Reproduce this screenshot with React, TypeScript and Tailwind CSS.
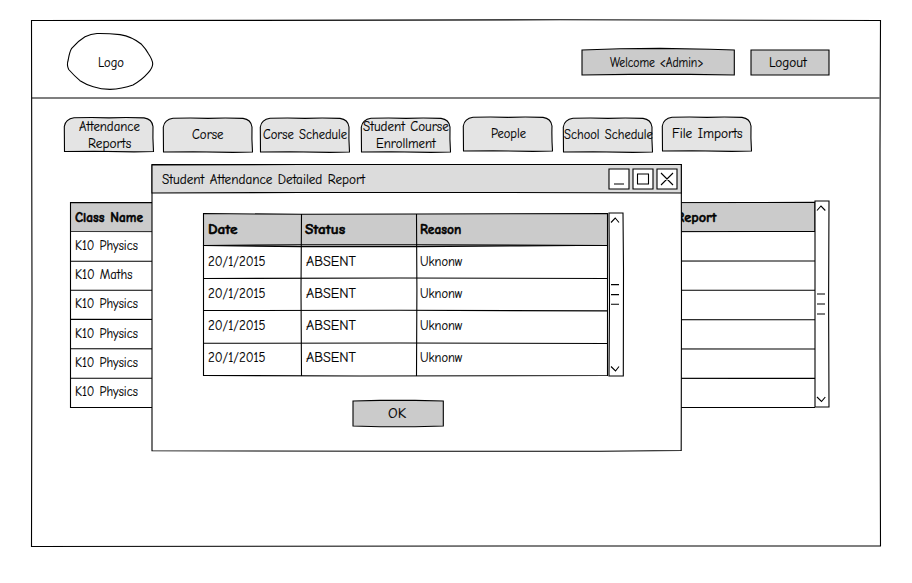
import { useLayoutEffect, useRef, useState } from "react";
import type { ReactNode } from "react";

/* Text stretched horizontally so that it fills the given width. */
function Fit({ children, w, className = "" }: { children: string; w: number; className?: string }) {
  const ref = useRef<HTMLSpanElement>(null);
  const [scale, setScale] = useState(1);
  useLayoutEffect(() => {
    const el = ref.current;
    if (el) setScale(w / el.offsetWidth);
  }, [w, children]);
  return (
    <span className={`block h-4 text-[13px] leading-[18px] ${className}`} style={{ width: w }}>
      <span
        ref={ref}
        className="block w-max origin-left whitespace-nowrap [word-spacing:1px]"
        style={{ transform: `scaleX(${scale})` }}
      >
        {children}
      </span>
    </span>
  );
}

/* Hand-drawn outline behind a box; path coordinates are page coordinates. */
function Sketch({ box, children }: { box: string; children: ReactNode }) {
  return (
    <svg
      viewBox={box}
      className="pointer-events-none absolute inset-0 h-full w-full overflow-visible"
      fill="none"
      stroke="#000"
      strokeWidth="1.1"
    >
      {children}
    </svg>
  );
}

const bold = "font-black [-webkit-text-stroke:0.45px_#000]";

const tabs = [
  { x: 64, y: 117.5, gap: "", pad: "pt-[1px]", lines: [{ t: "Attendance", w: 61 }, { t: "Reports", w: 43 }] },
  { x: 163, y: 118, gap: "ml-[9px]", pad: "pt-[9px]", lines: [{ t: "Corse", w: 31.5 }] },
  { x: 260, y: 118, gap: "ml-[7px]", pad: "pt-[9px]", lines: [{ t: "Corse Schedule", w: 84 }] },
  { x: 361, y: 118, gap: "ml-[11px]", pad: "pt-[1px]", lines: [{ t: "Student Course", w: 86 }, { t: "Enrollment", w: 60 }] },
  { x: 463, y: 117, gap: "ml-[12px]", pad: "pt-[8px]", lines: [{ t: "People", w: 34.5 }] },
  { x: 563, y: 118, gap: "ml-[10px]", pad: "pt-[9px]", lines: [{ t: "School Schedule", w: 88.5 }] },
  { x: 662, y: 117, gap: "ml-[9px]", pad: "pt-[8px]", lines: [{ t: "File Imports", w: 70.5 }] },
];

function Tab({ tab }: { tab: (typeof tabs)[number] }) {
  const { x, y } = tab;
  return (
    <div className={`relative h-[36px] w-[90px] ${tab.gap}`}>
      <Sketch box={`${x} 117 90 36`}>
        <path
          fill="#e4e4e4"
          d={`M${x + 0.5} ${y + 34} L${x + 0.3} ${y + 9} Q${x + 1.5} ${y + 1.5} ${x + 10} ${y + 0.3} Q${x + 30} ${y - 0.4} ${x + 45} ${y + 0.4} Q${x + 62} ${y - 0.4} ${x + 80} ${y + 0.4} Q${x + 88} ${y + 1.5} ${x + 89} ${y + 9} Q${x + 88.6} ${y + 20} ${x + 89.5} ${y + 34} L${x + 70} ${y + 34.4} L${x + 30} ${y + 33.7} Z`}
        />
      </Sketch>
      <div className={`relative flex flex-col items-center gap-px ${tab.pad}`}>
        {tab.lines.map((l) => (
          <Fit key={l.t} w={l.w}>{l.t}</Fit>
        ))}
      </div>
    </div>
  );
}

const classes = [
  { t: "K10 Physics", w: 63, h: "h-[29px]" },
  { t: "K10 Maths", w: 57, h: "h-[29px]" },
  { t: "K10 Physics", w: 63, h: "h-[30px]" },
  { t: "K10 Physics", w: 63, h: "h-[29px]" },
  { t: "K10 Physics", w: 63, h: "h-[29px]" },
  { t: "K10 Physics", w: 63, h: "h-[29px]" },
];

function ClassTable() {
  return (
    <div className="mt-[48px] ml-[39px] flex">
      <div className="relative h-[207px] w-[745px]">
        <Sketch box="70 201 745 207">
          <path fill="#cbcbcb" d="M70.5 202.5 L400 202.8 L815 202.4 V231.5 L400 232 L70.5 231.5 Z" />
          <path d="M70.5 231.5 V407.5 H815" />
          <path d="M70.5 261.3 L815 261M70.5 290.2 L815 290.2M70.5 319.4 L815 319.8M70.5 348.8 L815 349M70.5 378.2 L815 378.4" />
        </Sketch>
        <div className="relative flex h-[31px] pt-[8px] pl-[4.5px]">
          <Fit w={68} className={bold}>Class Name</Fit>
          <Fit w={40.5} className={`mr-[98.5px] ml-auto ${bold}`}>Report</Fit>
        </div>
        {classes.map((c, i) => (
          <div key={i} className={`relative pt-[5px] pl-[5px] ${c.h}`}>
            <Fit w={c.w}>{c.t}</Fit>
          </div>
        ))}
      </div>
      <div className="relative h-[207px] w-[15px]">
        <Sketch box="815 201 15 207">
          <path fill="#fff" d="M815 201 H829 L828.6 300 L829 407 H815 Z" />
          <path d="M817 210.5 L821 206 L825.3 210.5M817 397 L821.5 401.5 L825.3 397M817 294 H825M817 304 H825M817 314 H825" />
        </Sketch>
      </div>
    </div>
  );
}

function AbsenceTable() {
  return (
    <div className="ml-[52px] mt-[20px] flex">
      <div className="relative h-[164px] w-[405px]">
        <Sketch box="203 213 405 164">
          <path fill="#cbcbcb" d="M203.5 213.5 L301 214.3 L416 214 L607.5 213.5 V245.3 L520 246 L417 246.6 L300 246.6 L203.5 245.5 Z" />
          <path d="M203.5 245.5 L300 244.8 L417 244.8 L607.5 245.5M203.5 245 V375.5 L360 376 L607.5 375.5 V245" />
          <path d="M301.5 214 L301 290 L301.5 376M416.5 214 L416.9 290 L416.5 376" />
          <path d="M203.5 278.5 L400 278 L607.5 278.5M203.5 310.5 L400 310.3 L607.5 310.9M203.5 343.3 L400 343 L607.5 343.5" />
        </Sketch>
        <div className="relative grid h-[33px] grid-cols-[97px_114.5px_1fr] pt-[8px] pl-[5px]">
          <Fit w={29.5} className={bold}>Date</Fit>
          <Fit w={40} className={bold}>Status</Fit>
          <Fit w={41.5} className={bold}>Reason</Fit>
        </div>
        {[0, 1, 2, 3].map((r) => (
          <div key={r} className="relative grid h-[32px] grid-cols-[97.5px_114px_1fr] pt-[7px] pl-[5px]">
            <Fit w={57.5}>20/1/2015</Fit>
            <Fit w={50}>ABSENT</Fit>
            <Fit w={42}>Uknonw</Fit>
          </div>
        ))}
      </div>
      <div className="relative h-[164px] w-[16px]">
        <Sketch box="608 213 16 164">
          <path fill="#fff" d="M609 213 H623 L623.5 270 L623.3 376 H609 L609.5 300 Z" />
          <path d="M611 222.5 L615.2 218 L619 222.5M611 366.5 L615.5 371 L619 366.5M611 284.6 H619M611 294.6 H619M611 304.2 H619" />
        </Sketch>
      </div>
    </div>
  );
}

function Dialog() {
  return (
    <div className="absolute top-[164px] left-[151px] h-[288px] w-[531px]">
      <Sketch box="151 164 531 288">
        <path fill="#fff" d="M152 164.5 L681.3 164.5 L681.5 300 L681.2 450.5 L600 451.2 L400 451.3 L152 450.8 Z" />
        <path fill="#dcdcdc" d="M152 165 L300 164.5 L681.3 164.5 V193 L500 192.5 L300 192.5 L152 193 Z" />
      </Sketch>
      <div className="relative flex h-[29px] items-start pt-[4px] pr-[4px] pl-[11px]">
        <Fit w={202.5} className="mt-[3px]">Student Attendance Detailed Report</Fit>
        <div className="relative ml-auto h-[22px] w-[70px]">
          <Sketch box="608 168 70 22">
            <path fill="#fff" d="M609 169 H629 V189 H609 ZM633 169 H653 V189 H633 ZM657 169 H677 V189 H657 Z" />
            <path d="M614 184 H624M637.5 174 H648.5 V184 H637.5 ZM661 173 L673 185M673 173 L661 185" />
          </Sketch>
        </div>
      </div>
      <AbsenceTable />
      <div className="relative mt-[23px] ml-[202px] h-[27px] w-[91px]">
        <Sketch box="353 400 91 27">
          <path fill="#cbcbcb" d="M353 401 L380 400.4 L415 400.4 L443.3 401 V426 L415 426.7 L380 426.7 L353 426 Z" />
        </Sketch>
        <Fit w={18.5} className="relative ml-[35px] pt-[5px]">OK</Fit>
      </div>
    </div>
  );
}

export default function App() {
  return (
    <div className="relative h-[583px] w-[912px] overflow-hidden bg-white pt-[20px] pl-[31px] font-['Comic_Sans_MS','Comic_Neue',Lato,sans-serif] text-black [-webkit-text-stroke:0.15px_#000]">
      <div className="relative h-[527px] w-[850px]">
        <Sketch box="31 20 850 527">
          <path d="M31.5 20.5 L250 20.4 L560 19.8 L880.5 20.5 L880 150 L880 350 L880.5 546 L500 546 L31.5 546.5 L32 300 Z" />
          <path d="M32 98 H879.5" />
        </Sketch>
        <header className="relative flex h-[78px] items-start">
          <div className="relative mt-[13px] ml-[36px] h-[57px] w-[86px]">
            <Sketch box="67 33 86 57">
              <path d="M97 33.5 Q108 33.3 120 34.6 Q132 36.5 141.5 44.3 Q146 49 148.3 53.5 Q152.7 60 152.7 64 Q152.5 68 148.3 72.7 Q142 80 133 85 Q122 89 110 89.4 Q101 89.3 93.3 86.8 Q86 84.5 80 80.7 Q74 75.5 68.7 69.5 Q66.5 65 68.2 60 Q69.5 52 71.7 48.3 Q78 41 85 36.8 Q91 34 97 33.5 Z" />
            </Sketch>
            <Fit w={26} className="relative mt-[21px] ml-[30.5px]">Logo</Fit>
          </div>
          <div className="mt-[29px] mr-[51px] ml-auto flex gap-[17px]">
            <div className="relative h-[26px] w-[152px]">
              <Sketch box="582 49 152 26">
                <path fill="#cbcbcb" d="M582 50 L620 48.8 L660 48.4 L710 49.2 L734.3 50 V75 L690 74.4 L630 74.4 L582 75 Z" />
              </Sketch>
              <Fit w={94} className="relative mt-[5px] ml-[27.5px]">{"Welcome <Admin>"}</Fit>
            </div>
            <div className="relative h-[26px] w-[79px]">
              <Sketch box="751 49 79 26">
                <path fill="#cbcbcb" d="M751 50 H829 V75 H751 Z" />
              </Sketch>
              <Fit w={37.5} className="relative mt-[5px] ml-[17.5px]">Logout</Fit>
            </div>
          </div>
        </header>
        <nav className="flex pt-[19px] pl-[33px]">
          {tabs.map((t) => (
            <Tab key={t.x} tab={t} />
          ))}
        </nav>
        <ClassTable />
      </div>
      <Dialog />
    </div>
  );
}
